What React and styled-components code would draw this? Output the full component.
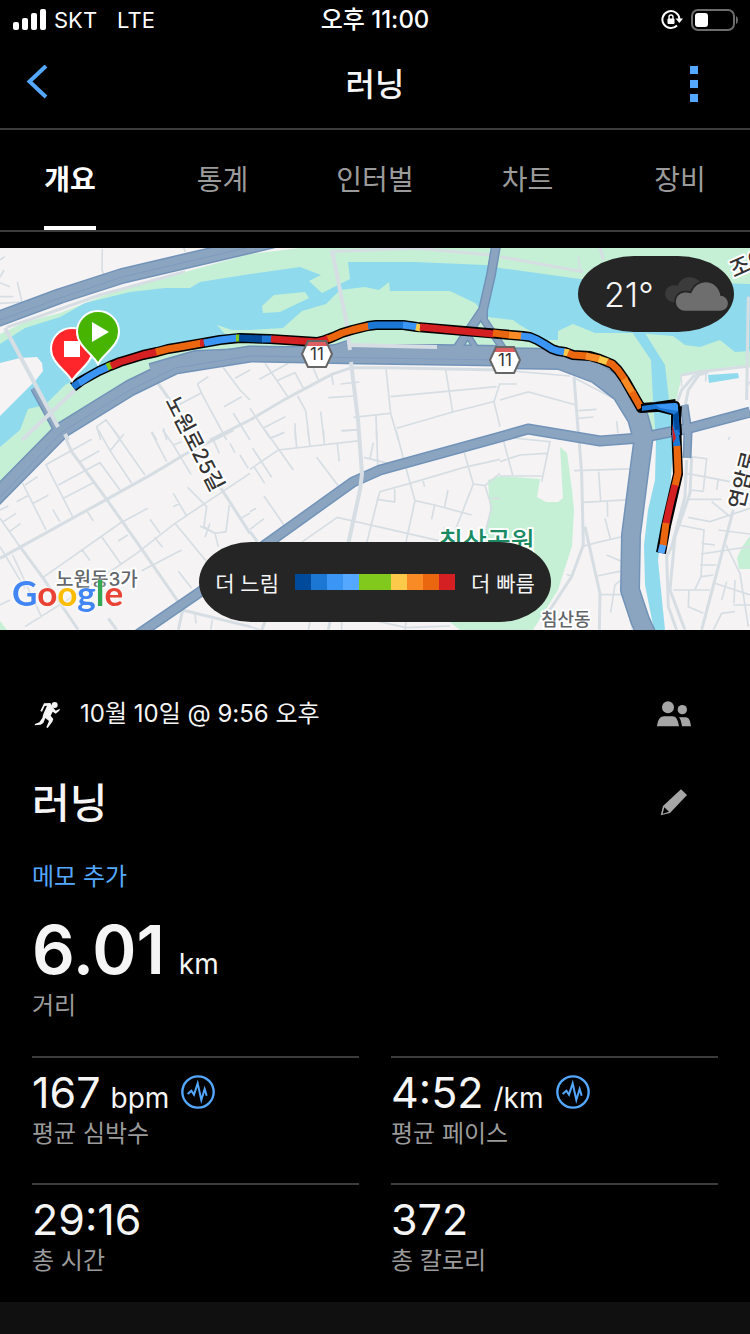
import React, { useState } from "react";
import styled, { createGlobalStyle } from "styled-components";

const GlobalStyle = createGlobalStyle`
  * {
    box-sizing: border-box;
  }

  body {
    margin: 0;
    background-color: #000;
    color: #f5f5f5;
    font-family: Inter, "Noto Sans CJK KR", sans-serif;
  }

  button {
    padding: 0;
    border: none;
    background: transparent;
    color: inherit;
    font: inherit;
    cursor: pointer;
  }

  svg {
    display: block;
  }
`;

const Page = styled.div`
  display: flex;
  flex-direction: column;
  min-height: 100vh;
`;

const StatusBar = styled.div`
  display: grid;
  grid-template-columns: 1fr auto 1fr;
  align-items: center;
  height: 40px;
  padding: 0 12px;
  color: #fff;
  font-size: 22px;
`;

const StatusGroup = styled.div`
  display: flex;
  align-items: center;
  justify-content: ${(props) => (props.$end ? "flex-end" : "flex-start")};
  gap: 8px;
`;

const Network = styled.span`
  margin-left: 12px;
`;

const Clock = styled.time`
  font-size: 24px;
  font-weight: 500;
  line-height: 36px;
`;

const Header = styled.header`
  display: grid;
  grid-template-columns: 76px 1fr 76px;
  align-items: center;
  height: 90px;
  padding: 0 18px 0 0;
  border-bottom: 2px solid #3c3c3c;
`;

const IconButton = styled.button`
  display: flex;
  align-items: center;
  justify-content: center;
  height: 80px;
`;

const HeaderTitle = styled.h1`
  margin: 0;
  padding: 0 0 4px 18px;
  font-size: 32px;
  font-weight: 500;
  text-align: center;
`;

const Tabs = styled.nav`
  display: flex;
  justify-content: space-between;
  height: 102px;
  padding: 0 18px;
  border-bottom: 2px solid #3c3c3c;
`;

const Tab = styled.button`
  display: flex;
  justify-content: center;
  width: 104px;
`;

const TabLabel = styled.span`
  height: 100px;
  border-bottom: 4px solid ${(props) => (props.$active ? "#fff" : "transparent")};
  color: ${(props) => (props.$active ? "#fff" : "#9b9b9b")};
  font-size: 28px;
  font-weight: ${(props) => (props.$active ? 700 : 400)};
  line-height: 100px;
`;

const MapArea = styled.section`
  position: relative;
  margin-top: 16px;
`;

const MapSvg = styled.svg`
  width: 100%;
  height: auto;
`;

const Weather = styled.div`
  position: absolute;
  top: 8px;
  right: 16px;
  display: flex;
  align-items: center;
  justify-content: space-between;
  width: 156px;
  height: 76px;
  padding: 0 6px 0 26px;
  border-radius: 56px / 38px;
  background-color: #252525;
  font-size: 34px;
  font-weight: 300;
`;

const Legend = styled.div`
  position: absolute;
  bottom: 8px;
  left: 50%;
  display: flex;
  align-items: center;
  justify-content: center;
  gap: 16px;
  width: 352px;
  height: 80px;
  border-radius: 52px / 40px;
  background-color: #252525;
  font-size: 21px;
  white-space: nowrap;
  transform: translateX(-50%);
`;

const Scale = styled.div`
  display: flex;
`;

const Swatch = styled.span`
  width: 16px;
  height: 16px;
  background-color: ${(props) => props.$color};
`;

const Summary = styled.main`
  padding: 40px 32px 25px;
`;

const Row = styled.div`
  display: grid;
  grid-template-columns: 1fr 88px;
  align-items: center;
  height: 88px;
`;

const DateLine = styled.div`
  display: flex;
  align-items: center;
  gap: 17px;
  font-size: 24px;
  line-height: 32px;
`;

const ActivityName = styled.h2`
  margin: 0;
  padding-bottom: 4px;
  font-size: 41px;
  font-weight: 500;
`;

const NoteLink = styled.a`
  display: block;
  height: 64px;
  color: #54a8ff;
  font-size: 24px;
  line-height: 62px;
  text-decoration: none;
`;

const Value = styled.div`
  display: flex;
  align-items: baseline;
  gap: ${(props) => (props.$large ? "14px" : "10px")};
  height: ${(props) => (props.$large ? "80px" : "52px")};
  font-size: ${(props) => (props.$large ? "67px" : "43px")};
  font-weight: ${(props) => (props.$large ? 600 : 400)};
  line-height: ${(props) => (props.$large ? "80px" : "52px")};
`;

const Unit = styled.span`
  font-size: 28px;
  font-weight: 400;
  line-height: 32px;
`;

const PulseButton = styled.button`
  align-self: center;
  margin-left: 2px;
`;

const Caption = styled.div`
  color: #9b9b9b;
  font-size: 24px;
  line-height: 32px;
`;

const StatGrid = styled.div`
  display: grid;
  grid-template-columns: 1fr 1fr;
  gap: 33px 32px;
  margin-top: 34px;
`;

const Stat = styled.div`
  padding-top: 8px;
  border-top: 2px solid #3c3c3c;
`;

const Footer = styled.div`
  flex: 1;
  min-height: 32px;
  background-color: #101010;
`;

const tabs = ["개요", "통계", "인터벌", "차트", "장비"];

const scaleColors = [
  "#004a9c",
  "#1b76d4",
  "#3b95f4",
  "#54a8ff",
  "#82c91e",
  "#82c91e",
  "#fcc94b",
  "#f98b26",
  "#eb670f",
  "#d42022",
];

const stats = [
  { value: "167", unit: "bpm", label: "평균 심박수", pulse: true },
  { value: "4:52", unit: "/km", label: "평균 페이스", pulse: true },
  { value: "29:16", label: "총 시간" },
  { value: "372", label: "총 칼로리" },
];

const routePath =
  "M73 387L81 381L90 376L99 371L110 366L120 362L130 359L143 355L157 352L168 349L180 347L203 343L220 340L240 338L270 339L317 342L325 340L333 337L342 333L352 330L360 328L368 326L376 325L385 325L403 325L417 327L500 334L523 336L530 337L537 340L544 344L552 349L558 351L565 352L573 355L590 356L600 359L612 364L618 370L625 380L633 394L641 408L656 407L676 404";

const route = [
  { color: "#1b76d4", d: "M73 387L80 382" },
  { color: "#3b95f4", d: "M79 383L90 376L99 371L108 367" },
  { color: "#82c91e", d: "M107 367L112 365" },
  { color: "#d42022", d: "M111 366L120 362L130 359L143 355L157 352" },
  { color: "#eb670f", d: "M156 352L168 349L180 347L202 343" },
  { color: "#d42022", d: "M200 343L204 343" },
  { color: "#3b95f4", d: "M204 343L220 340L237 338" },
  { color: "#82c91e", d: "M236 338L240 338" },
  { color: "#004a9c", d: "M239 338L263 339" },
  { color: "#1b76d4", d: "M262 339L272 339" },
  { color: "#d42022", d: "M271 339L317 342L325 340L329 338" },
  { color: "#eb670f", d: "M328 339L333 337L342 333L352 330L360 328L369 326" },
  { color: "#1b76d4", d: "M368 326L376 325L385 325L404 325" },
  { color: "#3b95f4", d: "M403 325L418 327" },
  { color: "#fcc94b", d: "M416 327L421 328" },
  { color: "#d42022", d: "M420 327L494 334" },
  { color: "#eb670f", d: "M493 333L510 335" },
  { color: "#f98b26", d: "M509 335L522 336" },
  { color: "#3b95f4", d: "M521 336L530 337L537 340L544 344L552 349L558 351L565 352" },
  { color: "#fcc94b", d: "M564 352L569 353" },
  { color: "#eb670f", d: "M568 353L573 355L587 356" },
  { color: "#f98b26", d: "M586 356L600 359" },
  { color: "#fcc94b", d: "M599 359L608 362" },
  { color: "#eb670f", d: "M607 362L612 364L618 370L625 380" },
  { color: "#f98b26", d: "M624 379L633 394" },
  { color: "#eb670f", d: "M632 392L641 408" },
];

const southRoute = [
  { color: "#1b76d4", d: "M675 430L677 447" },
  { color: "#eb670f", d: "M677 446L678 473L675 486" },
  { color: "#d42022", d: "M675 485L670 505L666 524" },
  { color: "#eb670f", d: "M666 523L663 546" },
  { color: "#54a8ff", d: "M663 545L661 553" },
];

// street tiles are drawn at three times the map scale
const streets = [
  {
    x: 0,
    y: 240,
    thin: "M307 28L306 90L313 105M52 126L66 186L0 190M0 128L30 140M0 170L40 170M0 60L14 50M0 112L12 90M592 432L625 410M592 432L610 470L680 600M535 495L605 458M668 380L720 450L750 480M705 415L750 390M672 500L725 470M700 520L750 600M302 600L290 560L318 540L358 592M455 575L470 600M490 565L500 600M550 20L556 36",
    wide: "M470 424L520 495M630 600L750 540M20 262L130 225L300 165L555 95M475 382L578 338",
  },
  {
    x: 250,
    y: 240,
    thin: "M45 370L112 468M28 418L115 370M80 422L135 398L160 445M190 385L205 420M143 468L167 512L178 600M245 403L250 435M272 432L328 426M235 473L312 468M212 515L222 600M310 532L422 520L408 385M422 520L445 600M378 522L380 600M275 573L325 569M422 470L740 440M587 390L608 516M440 565L608 516L732 485L750 430M732 485L750 560M0 505L60 595L103 577M42 563L106 530M135 550L137 600",
    wide: "M0 540L110 475L245 403L305 383L410 383M410 383L750 390M255 34L500 25L720 45",
  },
  {
    x: 500,
    y: 240,
    thin: "M0 390L210 408M0 432L50 432M0 480L85 456L228 495M235 512L290 508M235 535L280 531M350 543L354 580M225 415L350 480M543 405L545 440M235 50L240 88M740 440L750 425M690 590L685 600M618 400L617 425",
    wide: "M222 410L235 580M543 405L600 395L750 378M625 396L580 410L545 450L530 490M600 400L565 450L555 500M745 170L740 480M300 20L310 60M0 50L120 72L250 95",
  },
  {
    x: 0,
    y: 430,
    thin: "M0 265L60 350M275 28L138 104L218 260M175 165L300 98L360 180M190 205L283 157M240 95L298 62M295 0L330 62L395 160M330 62L372 12M340 0L435 135M455 8L500 95M488 0L520 45L573 133M520 45L545 35M640 30L658 70M690 40L705 68M720 75L745 115M68 160L138 300M75 165L113 140M100 220L145 196M50 215L83 197M0 240L25 228M10 275L48 250M28 305L62 280M158 238L180 275M262 245L280 273M0 350L75 475M38 375L125 562M125 445L360 280L443 235M0 525L30 510M75 590L250 480L410 370L525 280L660 190L750 130M305 320L365 405M247 360L270 392M355 333L383 315M450 268L480 310M463 322L488 352M525 280L620 395M425 422L545 360M535 424L575 475M520 190L558 255M520 230L540 220M563 172L620 230L612 290L645 310L678 305L688 225M600 288L645 310L655 350M630 280L615 322M725 263L750 250M585 550L588 580M637 570L632 600",
    wide: "M0 385L320 208L460 130L560 70L700 0M195 20L215 65L320 208L420 350L545 530M60 350L130 445L235 600M660 170L750 310M548 540L750 590M548 540L535 600M325 565L350 600",
  },
  {
    x: 250,
    y: 430,
    thin: "M0 118L85 60L330 32M45 0L130 120M62 24L103 8M135 0L140 52M173 0L180 46M220 0L223 42M262 42L268 94M275 2L328 0M8 55L65 142M12 110L44 160M42 198L102 285M0 245L18 235M0 298L42 266M200 82L265 168M380 0L383 105M370 38L360 85M342 82L415 100M438 0L460 85L495 212L467 340M350 340L383 208L390 185L480 160L640 113L750 88M383 208L434 216L434 170M518 148L524 170M643 68L670 162L612 310M495 212L554 225L665 255M594 180L584 230M554 225L545 268M583 292L582 310M150 340L262 262L580 335M670 162L705 167L750 130M705 167L725 230L708 300M725 205L750 205M0 590L30 600M180 575L175 600M275 575L275 600M388 575L468 593L600 588M468 575L465 600",
    wide: "M0 305L22 335M45 575L35 600M240 575L235 600",
  },
  {
    x: 500,
    y: 430,
    thin: "M10 30L38 135M0 95L60 75L140 70M0 20L150 35L125 155M0 138L125 138M222 122L415 116M296 125L302 212M250 217L390 209M322 215L323 260M315 265L332 330M245 350L290 338L375 318M320 375L375 398M290 438L370 422M375 440L345 465L332 547M298 494L370 494M200 433L218 440M570 80L620 86L610 180M560 130L690 155M570 180L612 184M655 145L650 180M565 208L665 208M535 285L612 300L603 440L585 478M565 262L630 275L750 235M605 340L645 345M603 372L750 350M600 405L650 405M605 440L640 435M520 480L630 480M567 480L565 530L610 550M678 345L720 430L745 590M645 460L750 495M680 455L665 510M705 450L702 520M640 600L665 550L705 545M700 525L750 525M655 300L750 312M635 215L690 260",
    wide: "M235 0L245 130L250 345L215 440L130 570M255 290L300 490L298 600M412 40L412 125L375 330L368 470L400 600M560 90L555 200L515 350L500 380L505 530L530 600M575 80L570 190L525 320L510 480L555 600M700 240L605 600",
  },
];

const highways = [
  { width: 14, d: "M-10 322L60 296L122 276L250 246L300 234" },
  { width: 15, d: "M-10 503L62 430L130 388L175 366L250 354L360 356L500 358L560 361" },
  { width: 8, d: "M150 368L195 355L340 349L440 349L500 350" },
  { width: 20, d: "M500 358L560 359L597 373L622 392L638 418L644 440" },
  { width: 18, d: "M644 435L640 465L631 535L630 590L640 620L650 642" },
  { width: 9, d: "M130 640L200 592L265 545L353 482L380 470L500 437L528 429L600 441L640 438L690 428L750 412" },
  { width: 8, d: "M497 240L491 275L483 310L456 350" },
  { width: 6, d: "M484 308L484 320L504 350" },
  { width: 5, d: "M466 332L480 355" },
  { width: 6, d: "M34 388L58 432" },
  { width: 7, d: "M684 405L688 432L687 458" },
  { width: 4, d: "M320 352L350 342" },
];

const Streets = () => (
  <g fill="none" stroke="#d6dee4">
    {streets.map((tile) => (
      <g
        key={`${tile.x}-${tile.y}`}
        transform={`translate(${tile.x} ${tile.y}) scale(0.3333)`}
      >
        <path d={tile.thin} strokeWidth="5" />
        <path d={tile.wide} strokeWidth="9" />
      </g>
    ))}
  </g>
);

const Highways = () => (
  <g fill="none" strokeLinejoin="round">
    <g stroke="#7293b8">
      {highways.map((road) => (
        <path key={road.d} d={road.d} strokeWidth={road.width + 2} />
      ))}
    </g>
    <g stroke="#8ba5c1">
      {highways.map((road) => (
        <path key={road.d} d={road.d} strokeWidth={road.width - 1} />
      ))}
    </g>
    <g stroke="#7f9bbd" strokeWidth="1">
      <path d="M0 320L60 298L122 277L250 247M0 497L62 432L130 390L175 368L250 356L500 360" />
    </g>
  </g>
);

const Shield = ({ x, y }) => (
  <g transform={`translate(${x} ${y})`}>
    <path d="M-9 -13H9L15 0L9 13H-9L-15 0Z" fill="#fff" />
    <path d="M-9 -13H9L11 -8H-11Z" fill="#dd5f61" />
    <path
      d="M-9 -13H9L15 0L9 13H-9L-15 0Z"
      fill="none"
      stroke="#666"
      strokeWidth="2"
    />
    <text y="6" fill="#333" fontSize="17" textAnchor="middle">
      11
    </text>
  </g>
);

const Pin = ({ x, y, color, children }) => (
  <g transform={`translate(${x} ${y})`}>
    <path
      d="M0 32C-5 22 -21 14 -21 0A21 21 0 0 1 21 0C21 14 5 22 0 32Z"
      fill={color}
      stroke="#fff"
      strokeWidth="2"
    />
    {children}
  </g>
);

const RouteMap = () => (
  <MapSvg viewBox="0 248 750 382" role="img" aria-label="러닝 경로">
    <rect y="248" width="750" height="382" fill="#f5f3f4" />
    <g fill="#c5f0d5">
      <path d="M0 334L25 322L60 313L118 290L185 272L250 254L300 248H750V366L682 376L675 405L668 440L640 440L615 385L590 362L500 352L200 354L150 370L70 425L0 484Z" />
      <path d="M488 480L500 476L540 479L537 497L546 502H558L563 498L560 447L567 453L572 490L574 510L572 546L558 590L533 630H460L450 622L480 560L490 510Z" />
      <path d="M737 558L742 547L750 536V569H739Z" />
      <path d="M0 621L7 630H0Z" />
    </g>
    <g fill="#90daee">
      <path d="M0 344L25 328L60 317L85 303L130 292L165 288H190L200 282L250 274L300 267L321 275L309 281L322 293L350 279L348 262H415L485 265L500 268L580 279L750 284V351L735 352L720 340L700 347L685 345L673 336L636 333H595L573 324L558 331V340L545 340L520 325L513 320L488 317L475 303L450 291H390L389 282L379 290L365 287L340 290L326 304L302 311L283 328L250 330H232L217 325L225 334L240 336L160 348L110 362L85 374L65 385L45 405L28 409L20 430L0 447Z" />
      <path d="M632 332L651 360L653 400L656 440L655 480L648 510L644 545L645 585L654 630H665L658 560L662 530L670 490L673 450L669 400L665 365L645 333Z" />
    </g>
    <path d="M263 313L262 306L274 295L305 292L309 298L280 312Z" fill="#c5f0d5" />
    <path d="M0 363L20 358L37 357L42 363L43 371L36 380L0 416Z" fill="#f5f3f4" />
    <path d="M682 376L735 366H750V415L688 424L677 405Z" fill="#f5f3f4" />
    <path d="M708 375L738 373L739 378L709 383Z" fill="#90daee" />
    <path d="M464 340L469 332L474 341Z" fill="#f5f3f4" />
    <Streets />
    <Highways />
    <g fill="none" stroke="#d6dee4" strokeWidth="4">
      <path d="M5 328L58 427M75 390L22 440" />
      <path d="M332 250L346 320L350 350M351 362L358 420L362 474L360 490L348 545" />
      <path d="M350 345L437 347M65 434L68 440" />
    </g>

    <g strokeLinejoin="round" fill="none">
      <path d={routePath} stroke="#000" strokeWidth="10" />
      <path
        d="M677 406L676 418L677 450L678 474L672 500L666 526L661 553"
        stroke="#000"
        strokeWidth="10"
      />
      <g strokeWidth="7">
        {route.map((part) => (
          <path key={part.d} d={part.d} stroke={part.color} />
        ))}
      </g>
    </g>
    <path
      d="M641 404L654 403L675 401Q680 401 680 406L682 435H671V415L655 411L641 412Z"
      fill="#000"
    />
    <path
      d="M642 406L656 404L675 403Q678 403 678 407L680 435H673V414L656 409L642 411Z"
      fill="#1b76d4"
    />
    <path d="M656 405L675 403Q678 403 678 407L678 411L660 408Z" fill="#3b95f4" />
    <path d="M673 415L678 412L680 432H675Z" fill="#004a9c" />
    <g fill="none" strokeWidth="7">
      {southRoute.map((part) => (
        <path key={part.d} d={part.d} stroke={part.color} />
      ))}
    </g>
    <path d="M672 424L676 438L673 443Z" fill="#d42022" />

    <Shield x={317} y={354} />
    <Shield x={505} y={360} />

    <g
      fill="#4a4d50"
      stroke="#fff"
      strokeWidth="4"
      strokeLinejoin="round"
      paintOrder="stroke"
      fontWeight="500"
    >
      <text x="56" y="586" fontSize="19" fill="#62666a">
        노원동3가
      </text>
      <text x="541" y="626" fontSize="18" fill="#62666a">
        침산동
      </text>
      <text x="439" y="551" fontSize="26" fill="#1a8a62">
        침산공원
      </text>
      <text transform="translate(165 401) rotate(63)" fontSize="21" fill="#333">
        노원로25길
      </text>
      <text transform="translate(743 510) rotate(-76)" fontSize="21" fill="#333">
        연암로
      </text>
      <text transform="translate(734 278) rotate(-24)" fontSize="22" fill="#333">
        조야
      </text>
    </g>

    <Pin x={72} y={349} color="#ff262b">
      <path d="M-8 -8H8V8H-8Z" fill="#fff" />
    </Pin>
    <Pin x={98} y={332} color="#46b400">
      <path d="M-6 -10L11 0L-6 10Z" fill="#fff" />
    </Pin>

    <text
      x="12"
      y="606"
      fontFamily="Lato, sans-serif"
      fontSize="35"
      fontWeight="700"
      style={{ filter: "drop-shadow(0 0 2px #fff)" }}
    >
      <tspan fill="#4285f4">G</tspan>
      <tspan fill="#ea4335">o</tspan>
      <tspan fill="#fbbc04">o</tspan>
      <tspan fill="#4285f4">g</tspan>
      <tspan fill="#34a853">l</tspan>
      <tspan fill="#ea4335">e</tspan>
    </text>
  </MapSvg>
);

const SignalIcon = () => (
  <svg width="34" height="22" viewBox="0 0 34 22" fill="#fff">
    <rect x="1" y="13" width="6" height="8" rx="2" />
    <rect x="10" y="9" width="6" height="12" rx="2" />
    <rect x="19" y="4" width="6" height="17" rx="2" />
    <rect x="28" y="0" width="6" height="21" rx="2" />
  </svg>
);

const RotationLockIcon = () => (
  <svg width="22" height="20" viewBox="0 0 22 20">
    <path
      d="M16 15.5A8.5 8.5 0 1 1 18.4 9"
      fill="none"
      stroke="#fff"
      strokeWidth="2"
    />
    <path d="M14.5 8.5H22L18.4 13Z" fill="#fff" />
    <rect x="6.5" y="8.5" width="7" height="5.5" rx="1" fill="#fff" />
    <path d="M8 9V7A2 2 0 0 1 12 7V9" fill="none" stroke="#fff" strokeWidth="1.4" />
  </svg>
);

const BatteryIcon = () => (
  <svg width="47" height="24" viewBox="0 0 47 24">
    <rect
      x="1"
      y="2"
      width="42"
      height="20"
      rx="6"
      fill="none"
      stroke="#6c6c6c"
      strokeWidth="2"
    />
    <rect x="4" y="5" width="13" height="14" rx="3" fill="#fff" />
    <path d="M45 8Q47 9 47 12Q47 15 45 16Z" fill="#6c6c6c" />
  </svg>
);

const BackIcon = () => (
  <svg width="24" height="38" viewBox="0 0 24 38">
    <path
      d="M20 1L3.5 16.5L20 32"
      fill="none"
      stroke="#54a8ff"
      strokeWidth="4"
    />
  </svg>
);

const MenuIcon = () => (
  <svg width="8" height="36" viewBox="0 0 8 36" fill="#54a8ff">
    <path d="M0 0H8V8H0ZM0 14H8V22H0ZM0 28H8V36H0Z" />
  </svg>
);

const CloudsIcon = () => (
  <svg width="63" height="36" viewBox="0 0 189 108">
    <path
      d="M24 79A25 25 0 0 1 28 28C34 28 36 29 38 30C44 8 66 2 76 4C94 6 108 16 111 28L60 79Z"
      fill="#3b3b3b"
    />
    <path
      d="M62 107A30 30 0 0 1 58 47Q66 46 77 49C84 28 102 16 122 16C146 16 165 34 168 57A25 25 0 0 1 164 107Z"
      fill="#6e6e6e"
      stroke="#252525"
      strokeWidth="5"
    />
  </svg>
);

const RunnerIcon = () => (
  <svg width="31" height="30" viewBox="0 0 93 90">
    <g fill="#f5f5f5">
      <circle cx="68" cy="18" r="9" />
      <path d="M36 13L55 12L64 26L71 35L84 29L82 35L71 44L62 38L56 50L64 60L61 68L47 87L43 85L51 66L40 57L34 72L26 77L8 79L9 75L22 70L31 57L34 45L45 20L38 21L30 38L25 36Z" />
    </g>
  </svg>
);

const PeopleIcon = () => (
  <svg width="34" height="26" viewBox="0 0 102 78" fill="#a6a6a6">
    <circle cx="33" cy="19" r="18" />
    <path d="M0 76C3 54 10 46 22 46H46C58 46 62 56 66 76Z" />
    <circle cx="76" cy="26" r="14" />
    <path d="M66 49H86C97 49 100 62 102 76H75C73 63 71 56 66 49Z" />
  </svg>
);

const PencilIcon = () => (
  <svg width="28" height="28" viewBox="0 0 84 84">
    <path d="M63 4L81 21L30 75L2 82L9 54Z" fill="#a6a6a6" />
    <path d="M13 58L27 71L8 77Z" fill="#000" />
  </svg>
);

const PulseIcon = () => (
  <svg width="34" height="34" viewBox="0 0 102 102" fill="none" stroke="#54a8ff">
    <circle cx="51" cy="51" r="47" strokeWidth="7" />
    <path d="M20 57L31 47L39 59L50 25L61 75L71 42L77 62" strokeWidth="6" />
  </svg>
);

const App = () => {
  const [activeTab, setActiveTab] = useState(tabs[0]);

  return (
    <Page>
      <GlobalStyle />
      <StatusBar>
        <StatusGroup>
          <SignalIcon />
          <span>SKT</span>
          <Network>LTE</Network>
        </StatusGroup>
        <Clock>오후 11:00</Clock>
        <StatusGroup $end>
          <RotationLockIcon />
          <BatteryIcon />
        </StatusGroup>
      </StatusBar>

      <Header>
        <IconButton aria-label="뒤로">
          <BackIcon />
        </IconButton>
        <HeaderTitle>러닝</HeaderTitle>
        <IconButton aria-label="메뉴">
          <MenuIcon />
        </IconButton>
      </Header>

      <Tabs>
        {tabs.map((tab) => (
          <Tab key={tab} onClick={() => setActiveTab(tab)}>
            <TabLabel $active={tab === activeTab}>{tab}</TabLabel>
          </Tab>
        ))}
      </Tabs>

      <MapArea>
        <RouteMap />
        <Weather>
          <span>21°</span>
          <CloudsIcon />
        </Weather>
        <Legend>
          <span>더 느림</span>
          <Scale>
            {scaleColors.map((color, index) => (
              <Swatch key={index} $color={color} />
            ))}
          </Scale>
          <span>더 빠름</span>
        </Legend>
      </MapArea>

      <Summary>
        <Row>
          <DateLine>
            <RunnerIcon />
            <span>10월 10일 @ 9:56 오후</span>
          </DateLine>
          <IconButton aria-label="공개 범위">
            <PeopleIcon />
          </IconButton>
        </Row>
        <Row>
          <ActivityName>러닝</ActivityName>
          <IconButton aria-label="이름 편집">
            <PencilIcon />
          </IconButton>
        </Row>
        <NoteLink href="#note">메모 추가</NoteLink>

        <Value $large>
          6.01 <Unit>km</Unit>
        </Value>
        <Caption>거리</Caption>

        <StatGrid>
          {stats.map((stat) => (
            <Stat key={stat.label}>
              <Value>
                {stat.value}
                {stat.unit && <Unit>{stat.unit}</Unit>}
                {stat.pulse && (
                  <PulseButton aria-label={`${stat.label} 차트`}>
                    <PulseIcon />
                  </PulseButton>
                )}
              </Value>
              <Caption>{stat.label}</Caption>
            </Stat>
          ))}
        </StatGrid>
      </Summary>
      <Footer />
    </Page>
  );
};

export default App;
